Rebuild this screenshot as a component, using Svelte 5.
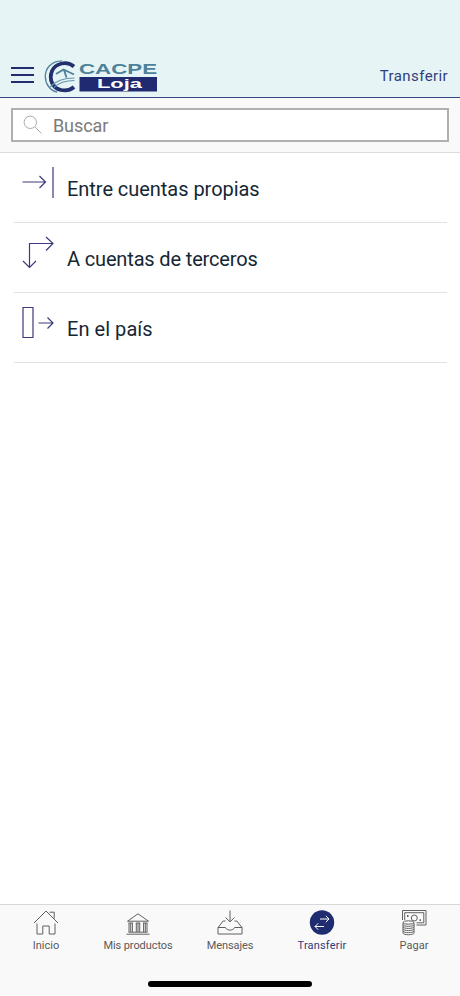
<script lang="ts">
  interface Transfer {
    id: string;
    label: string;
    spacing: number;
  }

  interface Tab {
    id: string;
    label: string;
    spacing: number;
  }

  // spacing is the tracking of each label, in px
  const transfers: Transfer[] = [
    { id: 'own', label: 'Entre cuentas propias', spacing: -0.04 },
    { id: 'third', label: 'A cuentas de terceros', spacing: -0.15 },
    { id: 'country', label: 'En el país', spacing: 0.05 },
  ];

  const tabs: Tab[] = [
    { id: 'home', label: 'Inicio', spacing: 0 },
    { id: 'products', label: 'Mis productos', spacing: -0.08 },
    { id: 'messages', label: 'Mensajes', spacing: -0.1 },
    { id: 'transfer', label: 'Transferir', spacing: 0.18 },
    { id: 'pay', label: 'Pagar', spacing: 0 },
  ];

  let current = $state('transfer');
</script>

<div class="screen">
  <header class="header">
    <button class="menu" aria-label="Menú">
      <span></span>
      <span></span>
      <span></span>
    </button>
    <svg class="logo" width="114" height="34" viewBox="0 0 114 34">
      <path d="M30 6.500C23 .5 11.500 3 8 11C4.500 19.500 9 28.500 17 30C22 31 26.500 30 30 27" fill="none" stroke="#23306f" stroke-width="3.800" />
      <path d="M18 .8C7 1 1.300 8.500 1.300 16.500C1.300 24 6 30.500 13 32" fill="none" stroke="#4c8299" stroke-width="1.300" />
      <path d="M12 14L19.500 9.500L30 14.500M20 10L22.500 17.500" fill="none" stroke="#4c8299" stroke-width="1.900" />
      <path d="M6 27C12 20.500 20 18 30.500 18M10 27.500C15 22.500 21 20.500 30.500 20.500" fill="none" stroke="#6296ab" stroke-width="1.200" />
      <text x="35" y="13.500" class="brand" textLength="78" lengthAdjust="spacingAndGlyphs">CACPE</text>
      <rect x="35.500" y="17" width="77.500" height="14.500" fill="#202a70" />
      <text x="53" y="28" class="city" textLength="45" lengthAdjust="spacingAndGlyphs">Loja</text>
    </svg>
    <h1>Transferir</h1>
  </header>

  <div class="search">
    <label class="field">
      <svg width="20" height="20" viewBox="0 0 20 20">
        <circle cx="7.300" cy="7.300" r="6.200" />
        <path d="M11.700 11.700L18.500 18.500" />
      </svg>
      <input type="text" placeholder="Buscar" />
    </label>
  </div>

  <ul class="list">
    {#each transfers as item}
      <li class="row">
        <svg class="row-icon" width="34" height="34" viewBox="0 0 34 34">
          {#if item.id === 'own'}
            <path d="M1.500 16H24.500M18.500 10L24.500 16L18.500 22M32 1V32" />
          {:else if item.id === 'third'}
            <path d="M8.500 31.500V7.500H32M25 1L32 7.500L25 14.500M2 25L8.500 31.500L15 25" />
          {:else}
            <path d="M2 1.500H12V31.500H2ZM17.500 17H32M26.500 11.500L32 17L26.500 22.500" />
          {/if}
        </svg>
        <span class="row-label" style="letter-spacing: {item.spacing}px">{item.label}</span>
      </li>
    {/each}
  </ul>

  <nav class="tabs">
    {#each tabs as tab}
      <button class="tab" class:active={tab.id === current} onclick={() => (current = tab.id)}>
        <svg width="28" height="28" viewBox="0 0 28 28">
          {#if tab.id === 'home'}
            <path d="M2 14L14 2L26 14M17.500 3.200H22.200V9.500M5 14.500V25H10.800V17H17.200V25H23V14.500" />
          {:else if tab.id === 'products'}
            <path d="M3.500 12.200H24.500L14 4.800ZM2.500 25.200H25.500M4.500 23.200H23.500M4.500 14H9M11.800 14H16.200M19 14H23.500" />
            <path d="M5 14V23M6.700 14V23M8.400 14V23M12.300 14V23M14 14V23M15.700 14V23M19.600 14V23M21.300 14V23M23 14V23" />
          {:else if tab.id === 'messages'}
            <path d="M14 1.500V12.500M9.500 8.500L14 12.800L18.500 8.500M9.500 12H7.200L2 18.500V25H26V18.500L20.800 12H18.500M2 18.500H9.500C10.500 22 17.500 22 18.500 18.500H26" />
          {:else if tab.id === 'transfer'}
            <circle class="disc" cx="14" cy="13.500" r="12.200" />
            <path class="arrows" d="M12 10H21M17.800 6.800L21 10L17.800 13.200M16 17.500H7M10.200 14.300L7 17.500L10.200 20.700" />
          {:else}
            <path d="M2.500 11V1.500H26V16H16.500M4.700 11V3.700H23.800V13.800H16.500" />
            <circle cx="14.300" cy="9" r="3" />
            <path d="M7 7H8.500M19.500 11.200H21" stroke-width="1.800" />
            <ellipse cx="8.500" cy="13.500" rx="5.500" ry="1.700" />
            <path d="M3 13.500V24C3 26.300 14 26.300 14 24V13.500M3 15.600C3 17.900 14 17.900 14 15.600M3 17.700C3 20 14 20 14 17.700M3 19.800C3 22.100 14 22.100 14 19.800M3 21.900C3 24.200 14 24.200 14 21.900" />
          {/if}
        </svg>
        <span style="letter-spacing: {tab.spacing}px">{tab.label}</span>
      </button>
    {/each}
    <div class="home-indicator"></div>
  </nav>
</div>

<style>
  :global(body) {
    background: #fff;
  }

  .screen {
    display: flex;
    flex-direction: column;
    height: 996px;
    box-sizing: border-box;
    background: #fff;
    font-family: Roboto, "Noto Sans", sans-serif;
  }

  button {
    padding: 0;
    border: 0;
    background: none;
    font: inherit;
  }

  .header {
    display: flex;
    align-items: center;
    flex-shrink: 0;
    box-sizing: border-box;
    height: 98px;
    padding: 53px 12px 0 11px;
    border-bottom: 1px solid #344580;
    background: #e6f4f6;
  }

  .menu {
    display: flex;
    flex-direction: column;
    gap: 5px;
    width: 23px;
    margin-right: 10px;
  }

  .menu span {
    height: 2px;
    background: #242c70;
  }

  .logo {
    margin-top: 3px;
  }

  .brand {
    font: bold 15px "Liberation Sans", Arial, sans-serif;
    fill: #4c8299;
  }

  .city {
    font: bold 12px "Liberation Sans", Arial, sans-serif;
    fill: #fff;
  }

  h1 {
    margin: 1px 0 0 auto;
    font-size: 15px;
    font-weight: 400;
    letter-spacing: 0.4px;
    color: #323e7c;
  }

  .search {
    flex-shrink: 0;
    box-sizing: border-box;
    height: 55px;
    padding: 10px 11px 0;
    border-bottom: 1px solid #dcdcdc;
    background: #f9f9f9;
  }

  .field {
    display: flex;
    align-items: center;
    box-sizing: border-box;
    height: 34px;
    padding-left: 10px;
    border: 2px solid #b0b0b0;
    background: #fff;
  }

  .field svg {
    fill: none;
    stroke: #aaa;
    stroke-width: 1;
  }

  input {
    flex: 1;
    min-width: 0;
    margin-left: 10px;
    padding: 0;
    border: 0;
    outline: 0;
    background: none;
    font: 18px Roboto, sans-serif;
    letter-spacing: -0.1px;
  }

  input::placeholder {
    color: #7b7b7b;
  }

  .list {
    flex: 1;
    margin: 0 13px 0 14px;
    padding: 0;
    list-style: none;
  }

  .row {
    display: flex;
    align-items: flex-start;
    box-sizing: border-box;
    height: 70px;
    padding: 13px 0 0 7px;
    border-bottom: 1px solid #e2e2e2;
  }

  .row-icon {
    flex-shrink: 0;
    margin-right: 12px;
    fill: none;
    stroke: #3c397e;
    stroke-width: 1.200;
  }

  .row-label {
    margin-top: 11px;
    font-size: 20px;
    line-height: 24px;
    color: #152735;
  }

  .tabs {
    position: relative;
    display: grid;
    grid-template-columns: repeat(5, 1fr);
    flex-shrink: 0;
    box-sizing: border-box;
    height: 92px;
    border-top: 1px solid #d8d8d8;
    background: #f9f9f9;
  }

  .tab {
    display: flex;
    flex-direction: column;
    align-items: center;
    padding-top: 4px;
    font-size: 11px;
    color: #5a5a5a;
  }

  .tab svg {
    fill: none;
    stroke: #606060;
    stroke-width: 1;
  }

  .tab span {
    margin-top: 2px;
    line-height: 14px;
    white-space: nowrap;
  }

  .tab.active {
    color: #2e397d;
  }

  .tab .disc {
    fill: #202c70;
    stroke: none;
  }

  .tab .arrows {
    stroke: #fff;
  }

  .home-indicator {
    position: absolute;
    bottom: 9px;
    left: 50%;
    width: 164px;
    height: 6px;
    border-radius: 3px;
    background: #000;
    transform: translateX(-50%);
  }
</style>
